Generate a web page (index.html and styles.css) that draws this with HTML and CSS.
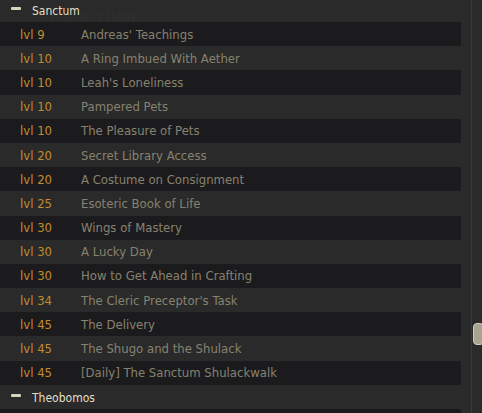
FILE: index.html
```html
<!DOCTYPE html>
<html>
<head>
<meta charset="utf-8">
<link rel="stylesheet" href="styles.css">
</head>
<body>
<div class="frame">
  <div class="list">
    <div class="ghost">Kishar Village</div>
    <div class="group-head"><span class="dash"></span><span class="group-name">Sanctum</span></div>
    <div class="row dark"><span class="lvl">lvl 9</span><span class="quest">Andreas' Teachings</span></div>
    <div class="row"><span class="lvl">lvl 10</span><span class="quest">A Ring Imbued With Aether</span></div>
    <div class="row dark"><span class="lvl">lvl 10</span><span class="quest">Leah's Loneliness</span></div>
    <div class="row"><span class="lvl">lvl 10</span><span class="quest">Pampered Pets</span></div>
    <div class="row dark"><span class="lvl">lvl 10</span><span class="quest">The Pleasure of Pets</span></div>
    <div class="row"><span class="lvl">lvl 20</span><span class="quest">Secret Library Access</span></div>
    <div class="row dark"><span class="lvl">lvl 20</span><span class="quest">A Costume on Consignment</span></div>
    <div class="row"><span class="lvl">lvl 25</span><span class="quest">Esoteric Book of Life</span></div>
    <div class="row dark"><span class="lvl">lvl 30</span><span class="quest">Wings of Mastery</span></div>
    <div class="row"><span class="lvl">lvl 30</span><span class="quest">A Lucky Day</span></div>
    <div class="row dark"><span class="lvl">lvl 30</span><span class="quest">How to Get Ahead in Crafting</span></div>
    <div class="row"><span class="lvl">lvl 34</span><span class="quest">The Cleric Preceptor's Task</span></div>
    <div class="row dark"><span class="lvl">lvl 45</span><span class="quest">The Delivery</span></div>
    <div class="row"><span class="lvl">lvl 45</span><span class="quest">The Shugo and the Shulack</span></div>
    <div class="row dark"><span class="lvl">lvl 45</span><span class="quest">[Daily] The Sanctum Shulackwalk</span></div>
    <div class="group-head"><span class="dash"></span><span class="group-name">Theobomos</span></div>
    <div class="row dark"></div>
  </div>
  <div class="scroll">
    <div class="thumb"></div>
  </div>
</div>
</body>
</html>
```
FILE: styles.css
```css
html, body {
  margin: 0;
  padding: 0;
  height: 100%;
  overflow: hidden;
}
body {
  background: #292a29;
  font-family: "DejaVu Sans", sans-serif;
}
.frame {
  display: flex;
  height: 413px;
  overflow: hidden;
}
.list {
  position: relative;
  width: 461px;
  flex: none;
  margin-top: -2.2px;
}
.ghost {
  position: absolute;
  left: 50px;
  top: 11px;
  font-size: 13px;
  color: rgba(255, 255, 255, 0.04);
}
.group-head {
  position: relative;
  height: 24.2px;
  display: flex;
  align-items: flex-start;
}
.dash {
  width: 10px;
  height: 3px;
  margin: 9.2px 11px 0 11px;
  background: #d9d5bd;
  border-radius: 1px;
}
.group-name {
  margin-top: 6px;
  font-family: "DejaVu Sans Condensed", "DejaVu Sans", sans-serif;
  font-stretch: condensed;
  font-size: 12px;
  line-height: 14px;
  color: #e3dfc7;
}
.row {
  position: relative;
  box-sizing: border-box;
  height: 24.2px;
  padding-top: 1px;
  display: flex;
  align-items: center;
  font-size: 11.7px;
}
.row.dark {
  background: #1b1b1d;
}
.lvl {
  width: 61px;
  padding-left: 20px;
  color: #c28b2f;
}
.quest {
  color: #878270;
}
.scroll {
  flex: 1;
  margin-left: 10px;
  border-left: 1px solid #3a3b3a;
  position: relative;
}
.thumb {
  position: absolute;
  left: 1px;
  right: -2px;
  top: 323px;
  height: 20px;
  background: #a7a591;
  border: 1px solid #d0ceb8;
  border-radius: 4px;
}
```
